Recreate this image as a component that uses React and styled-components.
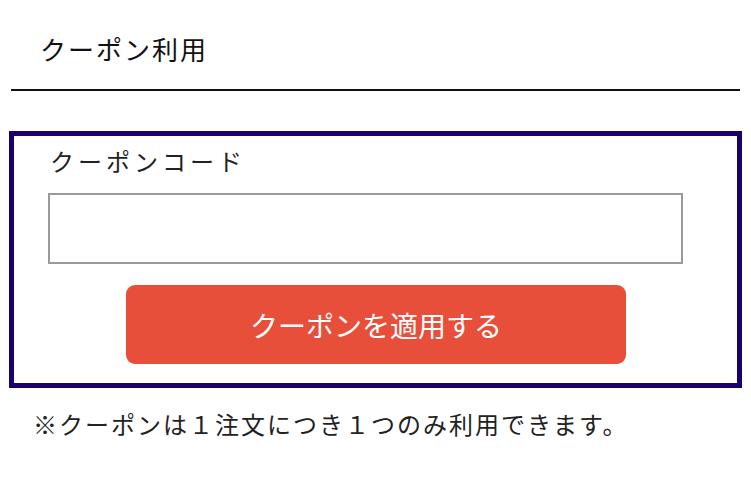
import styled, { createGlobalStyle } from "styled-components";

const GlobalStyle = createGlobalStyle`
  body {
    margin: 0;
    background: #fff;
    font-family: "Liberation Serif", "Noto Sans CJK JP", serif;
    color: #111;
  }
`;

export default function App() {
  return (
    <Page>
      <GlobalStyle />
      <Title>クーポン利用</Title>
      <Divider />
      <CouponBox>
        <Label htmlFor="coupon-code">クーポンコード</Label>
        <CodeInput id="coupon-code" type="text" />
        <ApplyButton type="button">クーポンを適用する</ApplyButton>
      </CouponBox>
      <Note>※クーポンは１注文につき１つのみ利用できます。</Note>
    </Page>
  );
}

const Page = styled.div`
  width: 751px;
  padding-top: 34px;
`;

const Title = styled.h2`
  margin: 0;
  padding-left: 40px;
  font-size: 26px;
  font-weight: normal;
  line-height: 36px;
  letter-spacing: 2px;
`;

const Divider = styled.hr`
  margin: 19px 11px 0;
  border: none;
  border-top: 2px solid #111;
`;

const CouponBox = styled.div`
  margin: 40px 9px 0 9px;
  width: 733px;
  box-sizing: border-box;
  border: 5px solid #1b006a;
  padding: 10px 0 19px 34px;
  display: flex;
  flex-direction: column;
`;

const Label = styled.label`
  padding-left: 2px;
  font-size: 24px;
  line-height: 34px;
  letter-spacing: 4px;
  color: #222;
`;

const CodeInput = styled.input`
  margin-top: 13px;
  width: 635px;
  height: 71px;
  box-sizing: border-box;
  border: 2px solid #9a9a9a;
  background: #fff;
  outline: none;
`;

const ApplyButton = styled.button`
  align-self: flex-start;
  margin: 21px 0 0 78px;
  width: 500px;
  height: 79px;
  border: none;
  border-radius: 9px;
  background: #e84f3a;
  color: #fff;
  font-family: "Noto Sans CJK JP", sans-serif;
  font-size: 28px;
  cursor: pointer;
`;

const Note = styled.p`
  margin: 20px 0 0 33px;
  font-size: 24px;
  line-height: 36px;
  letter-spacing: 2px;
  color: #222;
`;
